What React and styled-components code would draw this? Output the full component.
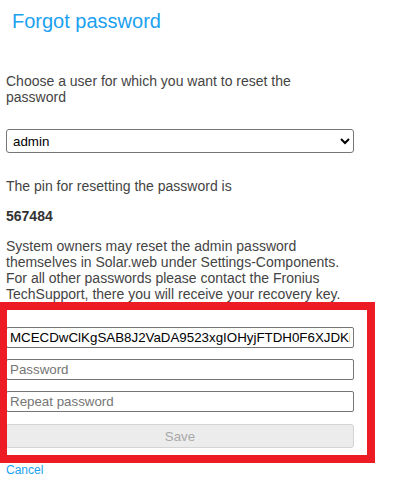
import React from 'react';
import styled, { createGlobalStyle } from 'styled-components';

const GlobalStyle = createGlobalStyle`
  body {
    margin: 0;
    background: #fff;
    font-family: "Liberation Sans", Arial, sans-serif;
  }
`;

const accent = '#1aa1ef';
const controlFont = '13.333px';

const Page = styled.div`
  width: 348px;
  padding: 10px 6px 0;
  color: #444;
  font-size: 14px;
  line-height: 16px;
`;

const Title = styled.h1`
  margin: 0 0 40px 6px;
  font-size: 20px;
  line-height: 23px;
  font-weight: normal;
  color: ${accent};
`;

const Text = styled.p`
  margin: ${(props) => props.spacing || '14px 0'};
  padding-right: 4px;
  font-weight: ${(props) => (props.bold ? 'bold' : 'normal')};
  color: ${(props) => (props.bold ? '#333' : '#444')};
`;

const Select = styled.select`
  display: block;
  width: 100%;
  height: 24px;
  margin: 24px 0 25px;
  padding: 0 2px;
  font-family: "Liberation Sans", Arial, sans-serif;
  font-size: ${controlFont};
  color: #000;
  background: #fff;
  border: 1px solid #767676;
  border-radius: 3px;
`;

const Form = styled.div`
  position: relative;
  display: flex;
  flex-direction: column;
  gap: 11px;
  padding: 25px 0 15px;
`;

const Highlight = styled.div`
  position: absolute;
  top: 0;
  bottom: 0;
  left: -7px;
  right: -21px;
  border: 8px solid #ed1c24;
  pointer-events: none;
`;

const Field = styled.input`
  display: block;
  box-sizing: border-box;
  width: 100%;
  height: 21px;
  margin: 0;
  padding: 1px 3px;
  font-family: "Liberation Sans", Arial, sans-serif;
  font-size: ${controlFont};
  color: #000;
  background: #fff;
  border: 1px solid #767676;
  border-radius: 2px;
  &::placeholder {
    color: #757575;
  }
`;

const SaveButton = styled.button`
  display: block;
  width: 100%;
  height: 24px;
  margin-top: 1px;
  font-family: "Liberation Sans", Arial, sans-serif;
  font-size: ${controlFont};
  color: #a9a9a9;
  background: #ececec;
  border: 1px solid #d4d4d4;
  border-radius: 3px;
`;

const CancelLink = styled.a`
  display: block;
  font-size: 12px;
  line-height: 14px;
  color: ${accent};
  text-decoration: none;
`;

export default function App() {
  return (
    <Page>
      <GlobalStyle />
      <Title>Forgot password</Title>
      <Text spacing="0">Choose a user for which you want to reset the password</Text>
      <Select defaultValue="admin">
        <option value="admin">admin</option>
        <option value="service">service</option>
      </Select>
      <Text spacing="0">The pin for resetting the password is</Text>
      <Text bold>567484</Text>
      <Text spacing="0">
        System owners may reset the admin password themselves in Solar.web under
        Settings-Components. For all other passwords please contact the Fronius
        TechSupport, there you will receive your recovery key.
      </Text>
      <Form>
        <Field type="text" defaultValue="MCECDwClKgSAB8J2VaDA9523xgIOHyjFTDH0F6XJDKi" />
        <Field type="password" placeholder="Password" />
        <Field type="password" placeholder="Repeat password" />
        <SaveButton disabled>Save</SaveButton>
        <Highlight />
      </Form>
      <CancelLink href="#">Cancel</CancelLink>
    </Page>
  );
}
